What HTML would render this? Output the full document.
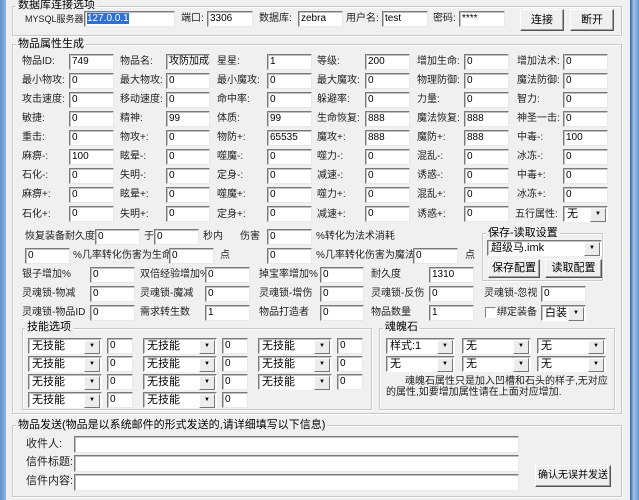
<!DOCTYPE html>
<html><head><meta charset="utf-8"><style>
*{margin:0;padding:0;box-sizing:border-box}
body{width:639px;height:500px;background:#f0f0f0;position:relative;overflow:hidden;font:10px "Liberation Sans","Noto Sans CJK SC",sans-serif;color:#000}
.lb{position:absolute;top:0;width:6px;height:500px;background:linear-gradient(90deg,#5d8fc8,#8cb6e6)}
.rb{position:absolute;top:0;left:630px;width:9px;height:500px;background:linear-gradient(90deg,#3a5f8c,#9cc2ea 40%,#6a9ad2)}
div{position:absolute;white-space:nowrap}
.l{line-height:14px;color:#222}
.i{background:#fff;height:16px;border:1px solid;border-color:#7a7a7a #e8e8e8 #e8e8e8 #7a7a7a;box-shadow:inset 1px 1px 0 #c0c0c0;padding-left:2px;line-height:14px;font-size:10px;overflow:hidden}
.s{background:#fff;height:16px;border:1px solid;border-color:#7a7a7a #fff #fff #7a7a7a;box-shadow:inset 1px 1px 0 #c0c0c0;padding-left:3px;line-height:14px;font-size:11px}
.s::after{content:"▼";position:absolute;right:1px;top:1px;width:14px;height:12px;background:#ececec;border:1px solid;border-color:#fff #777 #777 #fff;font-size:6px;line-height:11px;text-align:center}
.g{border:1px solid #c8c8c8;box-shadow:1px 1px 0 #fff inset,1px 1px 0 #fff}
.t{background:#f0f0f0;padding:0 2px;line-height:12px;font-size:11px}
.b{background:#f0f0f0;border:1px solid;border-color:#fff #555 #555 #fff;box-shadow:inset -1px -1px 0 #a0a0a0;text-align:center;font-size:11px}
</style></head><body>
<div class="lb"></div><div class="rb"></div>

<div class="g" style="left:12px;top:6px;width:610px;height:30px"></div>
<div class="t" style="left:16px;top:-1px">数据库连接选项</div>
<div class="l" style="left:25px;top:12px;font-size:9px">MYSQL服务器:</div>
<div class="i" style="left:84px;top:11px;width:91px"><span style="background:#3070d0;color:#fff">127.0.0.1</span></div>
<div class="l" style="left:181px;top:12px">端口:</div>
<div class="i" style="left:207px;top:11px;width:46px">3306</div>
<div class="l" style="left:259px;top:12px">数据库:</div>
<div class="i" style="left:298px;top:11px;width:45px">zebra</div>
<div class="l" style="left:346px;top:12px">用户名:</div>
<div class="i" style="left:382px;top:11px;width:46px">test</div>
<div class="l" style="left:433px;top:12px">密码:</div>
<div class="i" style="left:459px;top:11px;width:46px">****</div>
<div class="b" style="left:520px;top:9px;width:44px;height:22px;line-height:20px">连接</div>
<div class="b" style="left:570px;top:9px;width:44px;height:22px;line-height:20px">断开</div>

<div class="g" style="left:12px;top:44px;width:610px;height:370px"></div>
<div class="t" style="left:16px;top:38px">物品属性生成</div>

<div class="l" style="left:22px;top:55px">物品ID:</div><div class="i" style="left:69px;top:54px;width:45px">749</div>
<div class="l" style="left:120px;top:55px">物品名:</div><div class="i" style="left:166px;top:54px;width:44px">攻防加成</div>
<div class="l" style="left:217px;top:55px">星星:</div><div class="i" style="left:267px;top:54px;width:45px">1</div>
<div class="l" style="left:317px;top:55px">等级:</div><div class="i" style="left:365px;top:54px;width:45px">200</div>
<div class="l" style="left:417px;top:55px">增加生命:</div><div class="i" style="left:464px;top:54px;width:45px">0</div>
<div class="l" style="left:517px;top:55px">增加法术:</div><div class="i" style="left:563px;top:54px;width:45px">0</div>

<div class="l" style="left:22px;top:74px">最小物攻:</div><div class="i" style="left:69px;top:73px;width:45px">0</div>
<div class="l" style="left:120px;top:74px">最大物攻:</div><div class="i" style="left:166px;top:73px;width:44px">0</div>
<div class="l" style="left:217px;top:74px">最小魔攻:</div><div class="i" style="left:267px;top:73px;width:45px">0</div>
<div class="l" style="left:317px;top:74px">最大魔攻:</div><div class="i" style="left:365px;top:73px;width:45px">0</div>
<div class="l" style="left:417px;top:74px">物理防御:</div><div class="i" style="left:464px;top:73px;width:45px">0</div>
<div class="l" style="left:517px;top:74px">魔法防御:</div><div class="i" style="left:563px;top:73px;width:45px">0</div>

<div class="l" style="left:22px;top:93px">攻击速度:</div><div class="i" style="left:69px;top:92px;width:45px">0</div>
<div class="l" style="left:120px;top:93px">移动速度:</div><div class="i" style="left:166px;top:92px;width:44px">0</div>
<div class="l" style="left:217px;top:93px">命中率:</div><div class="i" style="left:267px;top:92px;width:45px">0</div>
<div class="l" style="left:317px;top:93px">躲避率:</div><div class="i" style="left:365px;top:92px;width:45px">0</div>
<div class="l" style="left:417px;top:93px">力量:</div><div class="i" style="left:464px;top:92px;width:45px">0</div>
<div class="l" style="left:517px;top:93px">智力:</div><div class="i" style="left:563px;top:92px;width:45px">0</div>

<div class="l" style="left:22px;top:112px">敏捷:</div><div class="i" style="left:69px;top:111px;width:45px">0</div>
<div class="l" style="left:120px;top:112px">精神:</div><div class="i" style="left:166px;top:111px;width:44px">99</div>
<div class="l" style="left:217px;top:112px">体质:</div><div class="i" style="left:267px;top:111px;width:45px">99</div>
<div class="l" style="left:317px;top:112px">生命恢复:</div><div class="i" style="left:365px;top:111px;width:45px">888</div>
<div class="l" style="left:417px;top:112px">魔法恢复:</div><div class="i" style="left:464px;top:111px;width:45px">888</div>
<div class="l" style="left:517px;top:112px">神圣一击:</div><div class="i" style="left:563px;top:111px;width:45px">0</div>

<div class="l" style="left:22px;top:131px">重击:</div><div class="i" style="left:69px;top:130px;width:45px">0</div>
<div class="l" style="left:120px;top:131px">物攻+:</div><div class="i" style="left:166px;top:130px;width:44px">0</div>
<div class="l" style="left:217px;top:131px">物防+:</div><div class="i" style="left:267px;top:130px;width:45px">65535</div>
<div class="l" style="left:317px;top:131px">魔攻+:</div><div class="i" style="left:365px;top:130px;width:45px">888</div>
<div class="l" style="left:417px;top:131px">魔防+:</div><div class="i" style="left:464px;top:130px;width:45px">888</div>
<div class="l" style="left:517px;top:131px">中毒-:</div><div class="i" style="left:563px;top:130px;width:45px">100</div>

<div class="l" style="left:22px;top:150px">麻痹-:</div><div class="i" style="left:69px;top:149px;width:45px">100</div>
<div class="l" style="left:120px;top:150px">眩晕-:</div><div class="i" style="left:166px;top:149px;width:44px">0</div>
<div class="l" style="left:217px;top:150px">噬魔-:</div><div class="i" style="left:267px;top:149px;width:45px">0</div>
<div class="l" style="left:317px;top:150px">噬力-:</div><div class="i" style="left:365px;top:149px;width:45px">0</div>
<div class="l" style="left:417px;top:150px">混乱-:</div><div class="i" style="left:464px;top:149px;width:45px">0</div>
<div class="l" style="left:517px;top:150px">冰冻-:</div><div class="i" style="left:563px;top:149px;width:45px">0</div>

<div class="l" style="left:22px;top:169px">石化-:</div><div class="i" style="left:69px;top:168px;width:45px">0</div>
<div class="l" style="left:120px;top:169px">失明-:</div><div class="i" style="left:166px;top:168px;width:44px">0</div>
<div class="l" style="left:217px;top:169px">定身-:</div><div class="i" style="left:267px;top:168px;width:45px">0</div>
<div class="l" style="left:317px;top:169px">减速-:</div><div class="i" style="left:365px;top:168px;width:45px">0</div>
<div class="l" style="left:417px;top:169px">诱惑-:</div><div class="i" style="left:464px;top:168px;width:45px">0</div>
<div class="l" style="left:517px;top:169px">中毒+:</div><div class="i" style="left:563px;top:168px;width:45px">0</div>

<div class="l" style="left:22px;top:188px">麻痹+:</div><div class="i" style="left:69px;top:187px;width:45px">0</div>
<div class="l" style="left:120px;top:188px">眩晕+:</div><div class="i" style="left:166px;top:187px;width:44px">0</div>
<div class="l" style="left:217px;top:188px">噬魔+:</div><div class="i" style="left:267px;top:187px;width:45px">0</div>
<div class="l" style="left:317px;top:188px">噬力+:</div><div class="i" style="left:365px;top:187px;width:45px">0</div>
<div class="l" style="left:417px;top:188px">混乱+:</div><div class="i" style="left:464px;top:187px;width:45px">0</div>
<div class="l" style="left:517px;top:188px">冰冻+:</div><div class="i" style="left:563px;top:187px;width:45px">0</div>

<div class="l" style="left:22px;top:208px">石化+:</div><div class="i" style="left:69px;top:206px;width:45px">0</div>
<div class="l" style="left:120px;top:208px">失明+:</div><div class="i" style="left:166px;top:206px;width:44px">0</div>
<div class="l" style="left:217px;top:208px">定身+:</div><div class="i" style="left:267px;top:206px;width:45px">0</div>
<div class="l" style="left:317px;top:208px">减速+:</div><div class="i" style="left:365px;top:206px;width:45px">0</div>
<div class="l" style="left:417px;top:208px">诱惑+:</div><div class="i" style="left:464px;top:206px;width:45px">0</div>
<div class="l" style="left:515px;top:208px">五行属性:</div><div class="s" style="left:563px;top:206px;width:45px">无</div>

<div class="l" style="left:25px;top:230px">恢复装备耐久度</div><div class="i" style="left:95px;top:229px;width:45px">0</div>
<div class="l" style="left:144px;top:230px">于</div><div class="i" style="left:154px;top:229px;width:45px">0</div>
<div class="l" style="left:203px;top:230px">秒内</div>
<div class="l" style="left:240px;top:230px">伤害</div><div class="i" style="left:267px;top:229px;width:45px">0</div>
<div class="l" style="left:316px;top:230px">%转化为法术消耗</div>

<div class="i" style="left:25px;top:248px;width:45px">0</div>
<div class="l" style="left:73px;top:249px">%几率转化伤害为生命</div>
<div class="i" style="left:169px;top:248px;width:45px">0</div>
<div class="l" style="left:220px;top:249px">点</div>
<div class="i" style="left:267px;top:248px;width:45px">0</div>
<div class="l" style="left:316px;top:249px">%几率转化伤害为魔法</div>
<div class="i" style="left:413px;top:248px;width:45px">0</div>
<div class="l" style="left:465px;top:249px">点</div>

<div class="g" style="left:482px;top:233px;width:121px;height:48px"></div>
<div class="t" style="left:486px;top:227px">保存-读取设置</div>
<div class="s" style="left:487px;top:240px;width:115px">超级马.imk</div>
<div class="b" style="left:488px;top:259px;width:52px;height:19px;line-height:17px">保存配置</div>
<div class="b" style="left:545px;top:259px;width:57px;height:19px;line-height:17px">读取配置</div>

<div class="l" style="left:22px;top:268px">银子增加%</div><div class="i" style="left:90px;top:267px;width:45px">0</div>
<div class="l" style="left:140px;top:268px">双倍经验增加%</div><div class="i" style="left:205px;top:267px;width:45px">0</div>
<div class="l" style="left:259px;top:268px">掉宝率增加%</div><div class="i" style="left:320px;top:267px;width:44px">0</div>
<div class="l" style="left:371px;top:268px">耐久度</div><div class="i" style="left:429px;top:267px;width:45px">1310</div>

<div class="l" style="left:22px;top:287px">灵魂锁-物减</div><div class="i" style="left:90px;top:286px;width:45px">0</div>
<div class="l" style="left:140px;top:287px">灵魂锁-魔减</div><div class="i" style="left:205px;top:286px;width:45px">0</div>
<div class="l" style="left:259px;top:287px">灵魂锁-增伤</div><div class="i" style="left:320px;top:286px;width:44px">0</div>
<div class="l" style="left:371px;top:287px">灵魂锁-反伤</div><div class="i" style="left:429px;top:286px;width:45px">0</div>
<div class="l" style="left:484px;top:287px">灵魂锁-忽视</div><div class="i" style="left:541px;top:286px;width:45px">0</div>

<div class="l" style="left:22px;top:306px">灵魂锁-物品ID</div><div class="i" style="left:90px;top:305px;width:45px">0</div>
<div class="l" style="left:140px;top:306px">需求转生数</div><div class="i" style="left:205px;top:305px;width:45px">1</div>
<div class="l" style="left:259px;top:306px">物品打造者</div><div class="i" style="left:320px;top:305px;width:44px">0</div>
<div class="l" style="left:371px;top:306px">物品数量</div><div class="i" style="left:429px;top:305px;width:45px">1</div>
<div style="left:485px;top:307px;width:11px;height:11px;background:#fff;border:1px solid;border-color:#808080 #fff #fff #808080"></div>
<div class="l" style="left:497px;top:306px">绑定装备</div>
<div class="s" style="left:541px;top:305px;width:45px">白装</div>

<div class="g" style="left:22px;top:328px;width:350px;height:82px"></div>
<div class="t" style="left:25px;top:321px">技能选项</div>
<div class="s" style="left:28px;top:338px;width:74px">无技能</div><div class="i" style="left:107px;top:338px;width:26px">0</div>
<div class="s" style="left:143px;top:338px;width:74px">无技能</div><div class="i" style="left:222px;top:338px;width:26px">0</div>
<div class="s" style="left:258px;top:338px;width:74px">无技能</div><div class="i" style="left:337px;top:338px;width:26px">0</div>
<div class="s" style="left:28px;top:356px;width:74px">无技能</div><div class="i" style="left:107px;top:356px;width:26px">0</div>
<div class="s" style="left:143px;top:356px;width:74px">无技能</div><div class="i" style="left:222px;top:356px;width:26px">0</div>
<div class="s" style="left:258px;top:356px;width:74px">无技能</div><div class="i" style="left:337px;top:356px;width:26px">0</div>
<div class="s" style="left:28px;top:374px;width:74px">无技能</div><div class="i" style="left:107px;top:374px;width:26px">0</div>
<div class="s" style="left:143px;top:374px;width:74px">无技能</div><div class="i" style="left:222px;top:374px;width:26px">0</div>
<div class="s" style="left:258px;top:374px;width:74px">无技能</div><div class="i" style="left:337px;top:374px;width:26px">0</div>
<div class="s" style="left:28px;top:392px;width:74px">无技能</div><div class="i" style="left:107px;top:392px;width:26px">0</div>
<div class="s" style="left:143px;top:392px;width:74px">无技能</div><div class="i" style="left:222px;top:392px;width:26px">0</div>

<div class="g" style="left:379px;top:328px;width:236px;height:82px"></div>
<div class="t" style="left:383px;top:321px">魂魄石</div>
<div class="s" style="left:386px;top:338px;width:69px">样式:1</div>
<div class="s" style="left:462px;top:338px;width:69px">无</div>
<div class="s" style="left:537px;top:338px;width:69px">无</div>
<div class="s" style="left:386px;top:356px;width:69px">无</div>
<div class="s" style="left:462px;top:356px;width:69px">无</div>
<div class="s" style="left:537px;top:356px;width:69px">无</div>
<div class="l" style="left:405px;top:376px;font-size:10px;line-height:11px">魂魄石属性只是加入凹槽和石头的样子,无对应</div>
<div class="l" style="left:386px;top:387px;font-size:10px;line-height:11px">的属性,如要增加属性请在上面对应增加.</div>

<div class="g" style="left:12px;top:425px;width:610px;height:72px"></div>
<div class="t" style="left:16px;top:419px">物品发送(物品是以系统邮件的形式发送的,请详细填写以下信息)</div>
<div class="l" style="left:26px;top:437px;font-size:11px">收件人:</div><div class="i" style="left:74px;top:436px;width:445px;height:17px"></div>
<div class="l" style="left:26px;top:455px;font-size:11px">信件标题:</div><div class="i" style="left:74px;top:455px;width:445px;height:17px"></div>
<div class="l" style="left:26px;top:474px;font-size:11px">信件内容:</div><div class="i" style="left:74px;top:474px;width:445px;height:17px"></div>
<div class="b" style="left:535px;top:465px;width:76px;height:22px;line-height:20px;font-size:10px">确认无误并发送</div>
</body></html>
